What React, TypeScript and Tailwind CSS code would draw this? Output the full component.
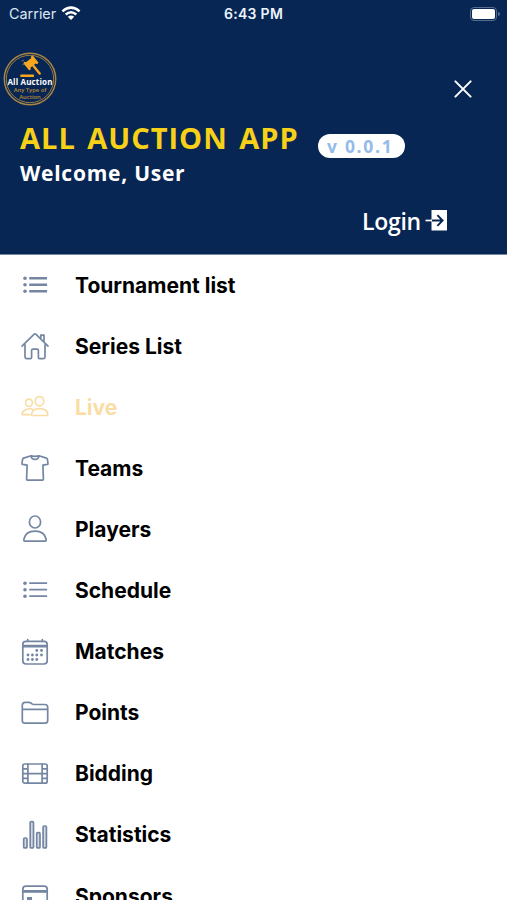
import type { ReactNode } from 'react';

const Svg = ({ children }: { children: ReactNode }) => (
  <svg viewBox="0 0 30 30" className="h-[30px] w-[30px] shrink-0" fill="none" stroke="currentColor" strokeWidth="1.7" strokeLinecap="round" strokeLinejoin="round">
    {children}
  </svg>
);

const List = ({ heavy = false }: { heavy?: boolean }) => (
  <Svg>
    <path strokeWidth={heavy ? 2.6 : 1.8} strokeLinecap="butt" d="M9.2 8.2h17.9M9.2 14.7h17.9M9.2 21.2h17.9" />
    <g fill="currentColor" stroke="none">
      <circle cx="5" cy="8.2" r="1.8" /><circle cx="5" cy="14.7" r="1.8" /><circle cx="5" cy="21.2" r="1.8" />
    </g>
  </Svg>
);

const Home = () => (
  <Svg>
    <path d="M5 13.8v12.2q0 1.6 1.6 1.6h3.8q1.2 0 1.2-1.2v-6.8q0-1.4 1.4-1.4h4q1.4 0 1.4 1.4v6.8q0 1.2 1.2 1.2h3.8q1.6 0 1.6-1.6V13.8M2 15.2 14.2 3.2q.8-.7 1.6 0L28 15.2M20.8 8V4.2h3.2v6.9" />
  </Svg>
);
const People = () => (
  <Svg>
    <ellipse cx="19.5" cy="9.2" rx="4.3" ry="4.6" />
    <path d="M19.5 16.6c-4.7 0-7.7 2.5-8.1 5.7-.1.8.3 1.2 1 1.2h14.5c.7 0 1-.4 1-1.2-.6-3.2-3.8-5.7-8.4-5.7Z" />
    <ellipse cx="9" cy="10.8" rx="3.4" ry="3.7" />
    <path d="M13.2 17.5c-5.2-2-10.4.5-11.1 4.2-.1.7.2 1 .9 1h6.4" />
  </Svg>
);
const Shirt = () => (
  <Svg>
    <path d="M11 2.8 3.6 5.1q-.8.3-1 1.1l-.6 4.3q-.1.7.7.9l4.4.7-.5 14q0 1 .8 1h15.2q.8 0 .8-1l-.5-14 4.4-.7q.8-.2.7-.9l-.6-4.3q-.2-.8-1-1.1L19 2.8c-1.4.7-6.6.7-8 0ZM11 2.8c.8 4.8 7.2 4.8 8 0" />
  </Svg>
);
const Person = () => (
  <Svg>
    <ellipse cx="15" cy="8" rx="5.6" ry="6" />
    <path d="M15 17.1c-6.2 0-10.3 3.3-11.2 8.4-.2 1 .3 1.6 1.1 1.6h20.2c.8 0 1.3-.6 1.1-1.6-.9-5.1-5-8.4-11.2-8.4Z" />
  </Svg>
);
const Calendar = () => (
  <Svg>
    <rect x="2.8" y="4.3" width="24.4" height="22.7" rx="3.2" />
    <path d="M7.7 2.5v1.8M22.3 2.5v1.8M2.8 9.7h24.4M2.8 8.7h24.4" />
    <g fill="currentColor" stroke="none">
      {[[16.8, 13.5], [21.5, 13.5], [8, 18], [12.4, 18], [16.8, 18], [21.5, 18], [8, 22.5], [12.4, 22.5], [16.8, 22.5]].map(([x, y]) => (
        <circle key={`${x}-${y}`} cx={x} cy={y} r="1.4" />
      ))}
    </g>
  </Svg>
);
const Folder = () => (
  <Svg>
    <path d="M2.3 11.8V7.2q0-2.8 2.8-2.8h4q1 0 1.8.6l1.1.9q.8.6 1.8.6h11.1q2.8 0 2.8 2.8v2.5M2.3 11.6v10.8q0 2.7 2.8 2.7h19.8q2.8 0 2.8-2.7V11.6q0-.2-.4-.2H2.7q-.4 0-.4.2Z" />
  </Svg>
);
const Film = () => (
  <Svg>
    <rect x="2.8" y="5" width="24.4" height="19.2" rx="2" />
    <path d="M7.9 5v19.2M22.1 5v19.2M7.9 14.6h14.2M2.8 9.8h5.1M2.8 14.6h5.1M2.8 19.4h5.1M22.1 9.8h5.1M22.1 14.6h5.1M22.1 19.4h5.1" />
  </Svg>
);
const Stats = () => (
  <Svg>
    <g fill="currentColor" fillOpacity=".3">
      <rect x="3.7" y="18" width="3.3" height="9.9" rx="1" />
      <rect x="10.2" y="1.6" width="3.3" height="26.3" rx="1" />
      <rect x="16.7" y="12.7" width="3.3" height="15.2" rx="1" />
      <rect x="23.1" y="6" width="3.3" height="21.9" rx="1" />
    </g>
  </Svg>
);
const Card = () => (
  <Svg>
    <rect x="2.8" y="5.2" width="24.4" height="20" rx="3.2" />
    <path strokeWidth="2.8" strokeLinecap="butt" d="M2.8 10.4h24.4" />
    <path strokeWidth="4" strokeLinecap="butt" d="M7 18h5" />
  </Svg>
);

const items = [
  { label: 'Tournament list', icon: <List heavy /> },
  { label: 'Series List', icon: <Home /> },
  { label: 'Live', icon: <People />, active: true },
  { label: 'Teams', icon: <Shirt /> },
  { label: 'Players', icon: <Person /> },
  { label: 'Schedule', icon: <List /> },
  { label: 'Matches', icon: <Calendar /> },
  { label: 'Points', icon: <Folder /> },
  { label: 'Bidding', icon: <Film /> },
  { label: 'Statistics', icon: <Stats /> },
  { label: 'Sponsors', icon: <Card /> },
];

const Wifi = () => (
  <svg viewBox="0 0 20 15" className="ml-[5px] h-[15px] w-5" fill="none" stroke="white" strokeWidth="2.5">
    <path d="M1.4 5.4Q10-2.1 18.6 5.4M4.7 8.5q5.3-4.6 10.6 0" />
    <path fill="white" stroke="none" d="M6.8 10.7q3.2-2.6 6.4 0L10 14.1Z" />
  </svg>
);

const Logo = () => (
  <div className="relative ml-[3px] flex h-[54px] w-[54px] flex-col items-center font-['Open_Sans',sans-serif] font-semibold">
    <svg viewBox="0 0 54 54" className="absolute inset-0 h-full w-full">
      <g fill="none" stroke="#a98543"><circle cx="27" cy="27" r="25.7" strokeWidth="1.5" /><circle cx="27" cy="27" r="23.7" strokeWidth=".9" /></g>
      <g fill="#f9a61f">
        <rect x="17.3" y="22.4" width="13.7" height="2.5" rx=".6" />
        <g transform="rotate(-39 28 10.8)">
          <rect x="23.6" y="7.3" width="8.8" height="7" />
          <rect x="21.8" y="5.9" width="2.5" height="9.8" rx="1" />
          <rect x="31.4" y="5.9" width="2.5" height="9.8" rx="1" />
          <rect x="26.8" y="13.8" width="2.4" height="12" rx="1" />
        </g>
      </g>
      <path d="M20.8 8.2l-2.3.8M21.6 11.5l-2.3 1.4" stroke="#8393a8" strokeWidth=".8" />
    </svg>
    <span className="relative mt-[25px] whitespace-nowrap text-[8px] font-bold leading-[9px] tracking-[0.15px] text-white">All Auction</span>
    <span className="relative whitespace-nowrap text-[5.8px] leading-[8px] text-[#bd8b35]">Any Type of</span>
    <span className="relative text-[5.8px] leading-[7px] text-[#bd8b35]">Auction</span>
  </div>
);

export default function App() {
  return (
    <div className="h-[900px] w-[507px] overflow-hidden bg-white font-[Inter,sans-serif]">
      <header className="flex h-[254.5px] flex-col border-b border-[#7387a5] bg-[#072654] text-white">
        <div className="grid h-[27px] shrink-0 grid-cols-3 items-center">
          <div className="flex items-center pl-[9px] text-[14.4px] text-[#dce6f2]"><span>Carrier</span><Wifi /></div>
          <span className="text-center text-[14px] font-semibold tracking-[0.3px] text-[#edf4fc]">6:43 PM</span>
          <div className="flex items-center justify-end pr-[7px]">
            <div className="h-[14px] w-[27px] rounded-[4px] border-[1.5px] border-[#566d8e] p-px"><div className="h-full w-full rounded-[2px] bg-white" /></div>
            <div className="ml-px h-[4px] w-[2px] rounded-r-full bg-[#566d8e]" />
          </div>
        </div>
        <div className="mt-[25px] flex h-[54px] shrink-0 items-center justify-between pr-[35px]">
          <Logo />
          <svg viewBox="0 0 18 18" className="mt-5 h-[18px] w-[18px]" stroke="white" strokeWidth="2" strokeLinecap="round"><path d="m1.4 1.4 15.2 15.2M16.6 1.4 1.4 16.6" /></svg>
        </div>
        <div className="mt-[12px] flex h-[41px] shrink-0 items-start pl-5 font-['Open_Sans',sans-serif]">
          <h1 className="w-[298px] whitespace-nowrap text-[29px] font-bold leading-[40px] tracking-[1px] [word-spacing:3px] text-[#f7d117]">ALL AUCTION APP</h1>
          <span className="mt-[16px] h-[24px] w-[87px] rounded-full bg-white pl-[9px] text-[17.5px] font-bold leading-[24px] tracking-[1.7px] text-[#94bbe9]">v 0.0.1</span>
        </div>
        <p className="pl-5 font-['Open_Sans',sans-serif] text-[21px] font-bold leading-[28px] tracking-[0.75px]">Welcome, User</p>
        <div className="mt-[18px] flex h-[32px] shrink-0 items-center pl-[362px] font-['Open_Sans',sans-serif] text-[23px] font-semibold">
          <span className="w-[62px] tracking-[-0.3px]">Login</span>
          <svg viewBox="0 0 24 24" className="h-[24px] w-[24px]" fill="none">
            <path fill="white" d="M7.5 1H23v20.5H7.5z" />
            <path d="M1.5 11.5h7" stroke="white" strokeWidth="1.7" />
            <path d="M8 11.5h10.5M13.4 6.2l5.2 5.3-5.2 5.3" stroke="#072654" strokeWidth="1.9" />
          </svg>
        </div>
      </header>
      <nav>
        {items.map(({ label, icon, active }) => (
          <div key={label} className={`flex h-[61.08px] items-center gap-[25px] pl-5 ${active ? 'text-[#f9dda4]' : 'text-[#7586a3]'}`}>
            {icon}
            <span className={`pt-[1.5px] text-[21px] font-bold leading-[28px] ${active ? '' : 'text-black'}`}>{label}</span>
          </div>
        ))}
      </nav>
    </div>
  );
}
